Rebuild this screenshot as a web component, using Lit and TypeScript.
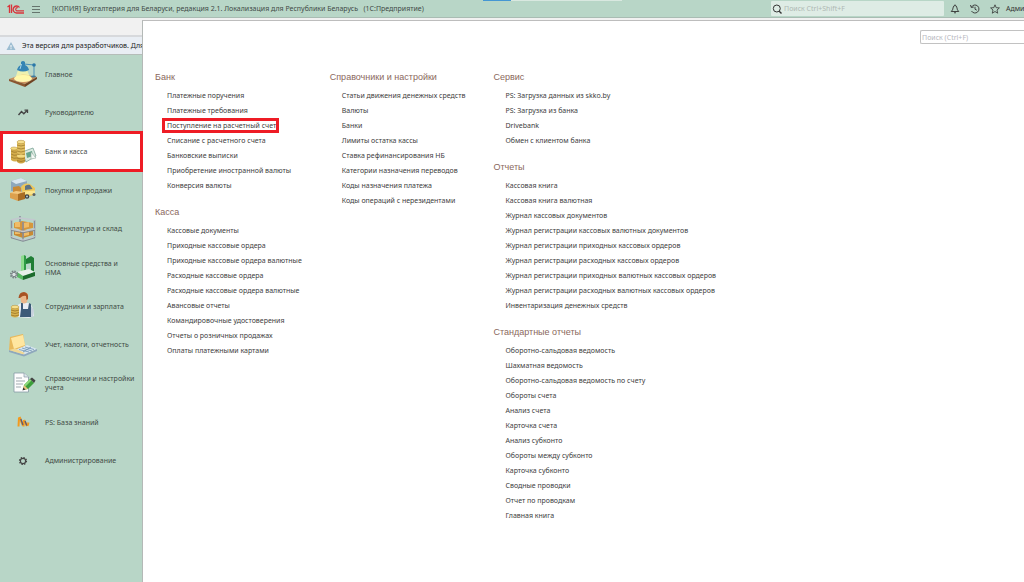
import { LitElement, html, css, svg } from "lit";
import { customElement } from "lit/decorators.js";
import { classMap } from "lit/directives/class-map.js";

const lamp = svg`
  <path d="M0 19 L14 14 L28 17 L16 24Z" fill="#c98f5c"/>
  <path d="M0 19 L16 24 L16 27 L0 21Z" fill="#8a5630"/>
  <path d="M16 24 L28 17 L28 19 L16 27Z" fill="#6f4222"/>
  <ellipse cx="14" cy="18.500" rx="9" ry="3.500" fill="#fff6b0"/>
  <path d="M9 10 L18 10 L22 19 L6 19Z" fill="#fff9a8" opacity=".75"/>
  <path d="M15 4 L25 5 L25 16" fill="none" stroke="#4a8fb8" stroke-width="1"/>
  <path d="M12 2 Q14 0 16 2 L16 5 Q19 6 20 10 Q14 13 8 10 Q9 6 12 5Z" fill="#3484b4"/>
  <path d="M12.500 4 L11 9" stroke="#a5d5ec" stroke-width="1"/>
  <circle cx="25" cy="5" r="1.800" fill="#2b78a8"/>
  <ellipse cx="24.500" cy="16.500" rx="2.500" ry="1" fill="#3f7c9d"/>`;

const trend = svg`
  <path d="M9.500 16 L12.500 12.500 L14.800 14.800 L18 11.500" fill="none" stroke="#444" stroke-width="1.400"/>
  <path d="M15.500 11.200 L18.500 11.200 L18.500 14" fill="none" stroke="#444" stroke-width="1.300"/>`;

const coins = svg`
  <path d="M13 14 L24 10 L27 18 L17 24Z" fill="#dcebe2" stroke="#6d9a8b" stroke-width=".7"/>
  <path d="M17 15 L23 13 L24 18 L18 20Z" fill="#67a58d"/>
  <path d="M22 14 L27 20 L22 21Z" fill="#f4f9f6" stroke="#93ab9e" stroke-width=".6"/>
  <path d="M2 10 L2 22 Q6 25 11 22 L11 10Z" fill="#d4ad4c"/>
  <path d="M8 4 L8 21 Q12 24 16 21 L16 4Z" fill="#dfbd5f"/>
  <path d="M8 7 Q12 9 16 7 M8 10 Q12 12 16 10 M8 13 Q12 15 16 13 M8 16 Q12 18 16 16 M2 13 Q5 15 8 14 M2 16 Q5 18 8 17 M2 19 Q5 21 8 20" fill="none" stroke="#967328" stroke-width=".7"/>
  <ellipse cx="12" cy="4" rx="4" ry="1.700" fill="#f6e08f" stroke="#af8937" stroke-width=".5"/>
  <ellipse cx="5" cy="10.500" rx="3.300" ry="1.500" fill="#f3da82" stroke="#af8937" stroke-width=".5"/>
  <path d="M8 18 L8 24 Q12 27 16 24 L16 18Z" fill="#cda443"/>
  <path d="M8 20 Q12 22 16 20 M8 22.500 Q12 24.500 16 22.500" fill="none" stroke="#967328" stroke-width=".7"/>
  <ellipse cx="12" cy="18" rx="4" ry="1.500" fill="#f3da82"/>`;

const truck = svg`
  <path d="M2 5 L12 2 L18 5 L18 18 L2 15Z" fill="#8ea8bd"/>
  <path d="M2 5 L12 2 L18 5 L7 8Z" fill="#d8e6ef"/>
  <path d="M12 11 Q15 6 21 8 L26 12 L26 19 L14 21Z" fill="#edc659"/>
  <path d="M16 10 Q19 8 21 9 L23.500 13 L16 14Z" fill="#5e7283"/>
  <path d="M14 15.500 L26 14.500 L26 18 L14 19Z" fill="#f9e58e"/>
  <circle cx="18" cy="20.500" r="2.300" fill="#3c4145"/><circle cx="18" cy="20.500" r="1" fill="#bcc"/>
  <circle cx="25" cy="18.500" r="1.500" fill="#5c6164"/>
  <path d="M4 11 L10 10 L12 12 L12 18 L4 18Z" fill="#c98936"/>
  <path d="M1 17 L9 16 L9 25 L1 22Z" fill="#dca04d"/>
  <path d="M9 17 L16 16 L16 23 L9 25Z" fill="#a96d23"/>
  <path d="M1 17 L7 15 L15 16 L9 18Z" fill="#f3c87f"/>`;

const shelf = svg`
  <path d="M5 8 L13 6 L24 8 L24 13 L14 15 L5 13Z" fill="#d6973d"/>
  <path d="M5 16 L13 14 L24 16 L24 20 L14 23 L5 20Z" fill="#c98a33"/>
  <path d="M6 7 L11 7 L11 12 L6 12Z M15 8 L20 7 L20 12 L15 13Z M6 15 L11 15 L11 19 L6 19Z M15 16 L20 15 L20 20 L15 21Z" fill="#efbc68"/>
  <path d="M2.500 5 L2.500 23 M25.500 5 L25.500 23 M14 7 L14 26 M11 1 L11 7" stroke="#8a8f9d" stroke-width="1.500"/>
  <path d="M2 5 L11 3 L26 5 M2 14 L14 16.500 L26 14 M2 21.500 L14 25 L26 21.500" fill="none" stroke="#c3c7cf" stroke-width="1.300"/>
  <path d="M2 15.300 L14 17.800 L26 15.300 M2 22.800 L14 26.300 L26 22.800" fill="none" stroke="#7d828e" stroke-width=".9"/>`;

const machine = svg`
  <path d="M12 2 L15 1 L15 17 L12 18Z" fill="#8fdb8e"/>
  <path d="M15 1 L17 2 L17 16 L15 17Z" fill="#2f9a45"/>
  <path d="M17 5 L22 2 L25 4 L25 19 L22 20 L22 9 L17 10Z" fill="#1f7e35"/>
  <path d="M8 18 L20 15 L26 18 L14 22Z" fill="#e7f0ea"/>
  <path d="M8 18 L14 22 L14 26 L8 23Z" fill="#58b963"/>
  <path d="M14 22 L26 18 L26 22 L14 26Z" fill="#1c6b2d"/>
  <circle cx="5" cy="20.500" r="3.200" fill="none" stroke="#777f83" stroke-width="1.800" stroke-dasharray="1.500 1"/>
  <circle cx="5" cy="20.500" r="2.200" fill="#dce2e4" stroke="#7b8488"/>`;

const worker = svg`
  <path d="M7 16 Q9 11 14 11 L20 11 Q24 12 25 24 L20 26 L9 25Z" fill="#e8edf3"/>
  <path d="M12 11 L14 11 L14 17 L19 17 L20 11 L22 12 L22 25 L11 25 L12 17Z" fill="#3c5b78"/>
  <path d="M22 14 L25 18 L24 25 L22 25Z" fill="#c6d1dc"/>
  <path d="M11 4 Q12 1 15 1 Q20 0 19 5 L18 10 Q15 13 12 10Z" fill="#eab68a"/>
  <path d="M9.500 6 Q10 0 15 0 Q20 1 19 7 L17.500 8 L17 4 Q14 3 11 6Z" fill="#a75224"/>
  <path d="M2 15 L2 24 Q6 27 10 24 L10 15Z" fill="#d8b34f"/>
  <path d="M2 18 Q6 20 10 18 M2 20.500 Q6 22.500 10 20.500 M2 23 Q6 25 10 23" fill="none" stroke="#987426" stroke-width=".8"/>
  <ellipse cx="6" cy="15" rx="4" ry="1.700" fill="#f7e18c" stroke="#ad8838" stroke-width=".5"/>`;

const laptop = svg`
  <path d="M1 6 L14 3 L16 15 L6 20 L0 19Z" fill="#e8b95c"/>
  <path d="M2 7 L14 4 L16 14 L5 18Z" fill="#ffe6a0"/>
  <path d="M6 19 L18 14 L28 18 L15 24Z" fill="#d8e6f0"/>
  <path d="M0 19 L15 23.500 L28 18 L28 20 L15 25.500 L0 21Z" fill="#8fa8bc"/>
  <path d="M0 19 L6 17.500 L16 22 L14 23.200Z" fill="#f1d894"/>
  <path d="M10 18.500 L20 21 M13 17 L23 20 M16 16 L25 18.500 M14 21 L22 16" stroke="#6f94b4" stroke-width=".8"/>`;

const note = svg`
  <path d="M5 4 L15 4 L19.500 8 L19.500 23 L5 23Z" fill="#fdfdfd" stroke="#8799a4" stroke-width=".8"/>
  <path d="M15 4 L15 8 L19.500 8" fill="#dde6ec" stroke="#8799a4" stroke-width=".7"/>
  <path d="M7 9 L13 9 M7 12 L16 12 M7 15 L14 15 M7 18 L12 18" stroke="#a0a9af" stroke-width="1"/>
  <path d="M14 21 L15 16 L21 10 L25 14 L19 20Z" fill="#3c9e3b"/>
  <path d="M15 16 L21 10 L22.500 11.500 L16.500 17.500Z" fill="#8bd878"/>
  <path d="M21 10 L23 8.500 L26.500 11.500 L25 14Z" fill="#444"/>
  <path d="M14 21 L15 16 L19 20Z" fill="#e9c17b"/><path d="M13.500 21.500 L14.300 18.500 L16.500 20.500Z" fill="#333"/>`;

const knowledge = svg`
  <path d="M9.500 18.500 L10 9.500 M14.500 18.500 L15 12 M18.500 18 L19.500 14.500" fill="none" stroke="#f39a1e" stroke-width="2"/>
  <path d="M10.500 9 L14 17.500 M15 12 L18 18" stroke="#f39a1e" stroke-width="2.200"/>
  <path d="M11.800 11 L14 17 M16 13 L17.800 17.500" stroke="#5f5a74" stroke-width="1.300"/>`;

const gear = svg`
  <circle cx="14" cy="14" r="3.400" fill="none" stroke="#444" stroke-width="1.400" stroke-dasharray="1.400 1.270"/>
  <circle cx="14" cy="14" r="2.600" fill="none" stroke="#444" stroke-width="1.100"/>`;

const sections = [
  { name: "Главное", icon: lamp },
  { name: "Руководителю", icon: trend },
  { name: "Банк и касса", icon: coins, active: true },
  { name: "Покупки и продажи", icon: truck },
  { name: "Номенклатура и склад", icon: shelf },
  { name: "Основные средства и НМА", icon: machine },
  { name: "Сотрудники и зарплата", icon: worker },
  { name: "Учет, налоги, отчетность", icon: laptop },
  { name: "Справочники и настройки учета", icon: note },
  { name: "PS: База знаний", icon: knowledge },
  { name: "Администрирование", icon: gear },
];

const marked = "Поступление на расчетный счет";

const columns = [
  [
    { title: "Банк", items: ["Платежные поручения", "Платежные требования", marked, "Списание с расчетного счета", "Банковские выписки", "Приобретение иностранной валюты", "Конверсия валюты"] },
    { title: "Касса", items: ["Кассовые документы", "Приходные кассовые ордера", "Приходные кассовые ордера валютные", "Расходные кассовые ордера", "Расходные кассовые ордера валютные", "Авансовые отчеты", "Командировочные удостоверения", "Отчеты о розничных продажах", "Оплаты платежными картами"] },
  ],
  [
    { title: "Справочники и настройки", items: ["Статьи движения денежных средств", "Валюты", "Банки", "Лимиты остатка кассы", "Ставка рефинансирования НБ", "Категории назначения переводов", "Коды назначения платежа", "Коды операций с нерезидентами"] },
  ],
  [
    { title: "Сервис", items: ["PS: Загрузка данных из skko.by", "PS: Загрузка из банка", "Drivebank", "Обмен с клиентом банка"] },
    { title: "Отчеты", items: ["Кассовая книга", "Кассовая книга валютная", "Журнал кассовых документов", "Журнал регистрации кассовых валютных документов", "Журнал регистрации приходных кассовых ордеров", "Журнал регистрации расходных кассовых ордеров", "Журнал регистрации приходных валютных кассовых ордеров", "Журнал регистрации расходных валютных кассовых ордеров", "Инвентаризация денежных средств"] },
    { title: "Стандартные отчеты", items: ["Оборотно-сальдовая ведомость", "Шахматная ведомость", "Оборотно-сальдовая ведомость по счету", "Обороты счета", "Анализ счета", "Карточка счета", "Анализ субконто", "Обороты между субконто", "Карточка субконто", "Сводные проводки", "Отчет по проводкам", "Главная книга"] },
  ],
];

@customElement("top-bar")
class TopBar extends LitElement {
  static styles = css`
    :host { display: flex; align-items: center; position: relative; height: 17px; overflow: hidden; background: #b8d6c7; border-bottom: 1px solid #a9bcb3; color: #414a46; white-space: nowrap; }
    .logo { width: 18px; height: 12px; margin-left: 7px; }
    .icon { display: block; width: 10px; height: 10px; }
    button { padding: 0; border: 0; background: none; color: inherit; font: inherit; white-space: nowrap; }
    .menu { margin: 0 11px 0 6px; }
    .title { flex: 1; font-size: 7px; font-weight: 400; margin: 0; white-space: pre; }
    .progress { position: absolute; top: 0; left: 47.2%; width: 139px; height: 1px; background: linear-gradient(to right, #4597d3 28px, #d9e8e0 28px); }
    .search { display: flex; align-items: center; width: 173px; height: 15px; gap: 2px; padding-left: 1px; box-sizing: border-box; background: #deece5; border-radius: 1px; }
    .search input { flex: 1; min-width: 0; padding: 0; border: 0; outline: 0; background: none; font: inherit; }
    input::placeholder { color: #afb9b4; }
    .tools { display: flex; align-items: center; gap: 10px; width: 80px; padding-left: 6px; box-sizing: border-box; overflow: hidden; }
    .tools button { flex: none; }
    .tools .user { color: #333; margin-left: -4px; }
  `;
  render() {
    return html`
      <svg class="logo" viewBox="0 0 18 12" fill="none" stroke="#d9343b">
        <path d="M.500 4 L2.500 2.500 L2.500 10" stroke-width="1.300"/><path d="M4.500 1.500 L4.500 10" stroke-width="1.300"/>
        <path d="M12.500 4.500 A3.500 3.500 0 1 0 9.500 10 L17 10" stroke-width="1.300"/>
        <path d="M10.800 4.800 A1.600 1.600 0 1 0 9.800 7.900 L17 7.900" stroke-width="1.100"/>
      </svg>
      <button class="menu" aria-label="Меню"><svg class="icon" viewBox="0 0 10 10"><path d="M1 2.500 H9 M1 5.500 H9 M1 8.500 H9" stroke="#66756e"/></svg></button>
      <h1 class="title">[КОПИЯ] Бухгалтерия для Беларуси, редакция 2.1. Локализация для Республики Беларусь   (1С:Предприятие)</h1>
      <span class="progress"></span>
      <label class="search">
        <svg class="icon" viewBox="0 0 10 10" fill="none" stroke="#333"><circle cx="4.800" cy="4.500" r="3.500"/><path d="M7.200 7.200 L9.500 9.500" stroke-width="1.400"/></svg>
        <input type="text" aria-label="Поиск" placeholder="Поиск Ctrl+Shift+F">
      </label>
      <div class="tools">
        <button aria-label="Уведомления"><svg class="icon" viewBox="0 0 10 10" fill="none" stroke="#333" stroke-width=".9"><path d="M1.200 7.500 Q3 6 3 4 Q3.200 1.500 5 1.500 Q6.800 1.500 7 4 Q7 6 8.800 7.500Z"/><path d="M4 8.500 Q5 9.600 6 8.500 M5 .5 V1.500"/></svg></button>
        <button aria-label="История"><svg class="icon" viewBox="0 0 10 10" fill="none" stroke="#333" stroke-width=".9"><path d="M1.500 3 A4 4 0 1 1 1.500 7 M.5 1 L1.300 3.500 L3.800 3 M5 2.800 V5.200 L6.800 6.200"/></svg></button>
        <button aria-label="Избранное"><svg class="icon" viewBox="0 0 10 10" fill="none" stroke="#333" stroke-width=".8"><path d="M5 .8 L6.200 3.700 L9.400 3.900 L7 6 L7.700 9.200 L5 7.500 L2.300 9.200 L3 6 L.6 3.900 L3.800 3.700Z"/></svg></button>
        <button class="user">Админ</button>
      </div>`;
  }
}

@customElement("section-nav")
class SectionNav extends LitElement {
  static styles = css`
    :host { display: flex; flex-direction: column; min-height: 0; }
    .tabs { height: 17px; background: #f1f1f1; border-bottom: 2px solid #d7d9dc; box-sizing: content-box; }
    .notice { display: flex; align-items: center; gap: 6px; height: 17px; padding-left: 6px; overflow: hidden; background: #e9eef4; border-bottom: 1px solid #b5bdb9; color: #222; white-space: nowrap; }
    .notice svg { flex: none; width: 10px; height: 10px; }
    nav { flex: 1; display: flex; flex-direction: column; padding-bottom: 102px; background: #b8d6c7; }
    .item { position: relative; flex: 1; display: flex; align-items: center; gap: 8px; padding: 0 7px 0 9px; color: #3f4a45; line-height: 9px; text-decoration: none; }
    .item svg { flex: none; width: 28px; height: 28px; }
    .active { background: #fff; }
    .active::after { content: ""; position: absolute; inset: -1px -1px -1px 0; z-index: 1; border: 3px solid #ee1c25; }
  `;
  render() {
    return html`
      <div class="tabs"></div>
      <div class="notice"><svg viewBox="0 0 10 10"><path d="M5 1 L9.500 9 H.5Z" fill="#9cbdd2"/><path d="M5 4 V6.500 M5 7.200 V8.200" stroke="#fff"/></svg><span>Эта версия для разработчиков. Для</span></div>
      <nav>${sections.map((s) => html`<a href="#" class=${classMap({ item: true, active: !!s.active })}><svg viewBox="0 0 28 28">${s.icon}</svg><span>${s.name}</span></a>`)}</nav>`;
  }
}

@customElement("function-panel")
class FunctionPanel extends LitElement {
  static styles = css`
    :host { display: block; min-width: 0; overflow: hidden; background: #fff; }
    .find { display: flex; justify-content: flex-end; padding-top: 9px; }
    .find input { width: 104px; height: 14px; box-sizing: border-box; padding: 0 1px; border: 1px solid #c2c2c2; border-right: 0; border-radius: 2px 0 0 2px; font: inherit; outline: 0; }
    input::placeholder { color: #b7b7be; }
    .columns { display: flex; gap: 28px; padding: 23px 12px; }
    .column { display: flex; flex-direction: column; gap: 9px; white-space: nowrap; }
    h2 { margin: 0; color: #8a685c; font-family: "Liberation Sans", Arial, sans-serif; font-size: 9px; line-height: 20px; font-weight: 400; }
    ul { margin: 0; padding: 1px 0 0 12px; list-style: none; }
    li { line-height: 15px; }
    a { position: relative; display: inline-block; vertical-align: top; color: #3d3d3d; text-decoration: none; }
    .marked::after { content: ""; position: absolute; inset: 0 -3px 0 -5px; border: 3px solid #ee1c25; }
  `;
  render() {
    return html`
      <div class="find"><input type="text" aria-label="Поиск" placeholder="Поиск (Ctrl+F)"></div>
      <div class="columns">${columns.map((groups) => html`<div class="column">${groups.map((g) => html`
        <section><h2>${g.title}</h2><ul>${g.items.map((t) => html`<li><a href="#" class=${classMap({ marked: t === marked })}>${t}</a></li>`)}</ul></section>`)}</div>`)}</div>`;
  }
}

@customElement("app-root")
class AppRoot extends LitElement {
  static styles = css`
    :host { display: flex; flex-direction: column; min-height: 100vh; background: #f1f1f1; font-family: "Noto Sans", "Open Sans", sans-serif; font-size: 7px; }
    .body { flex: 1; display: grid; grid-template-columns: 142px minmax(0, 1fr); }
    .panel { margin-top: 2px; border-top: 1px solid #bdbdbd; border-left: 1px solid #b4b9b7; }
  `;
  render() {
    return html`<top-bar></top-bar><div class="body"><section-nav></section-nav><function-panel class="panel"></function-panel></div>`;
  }
}
